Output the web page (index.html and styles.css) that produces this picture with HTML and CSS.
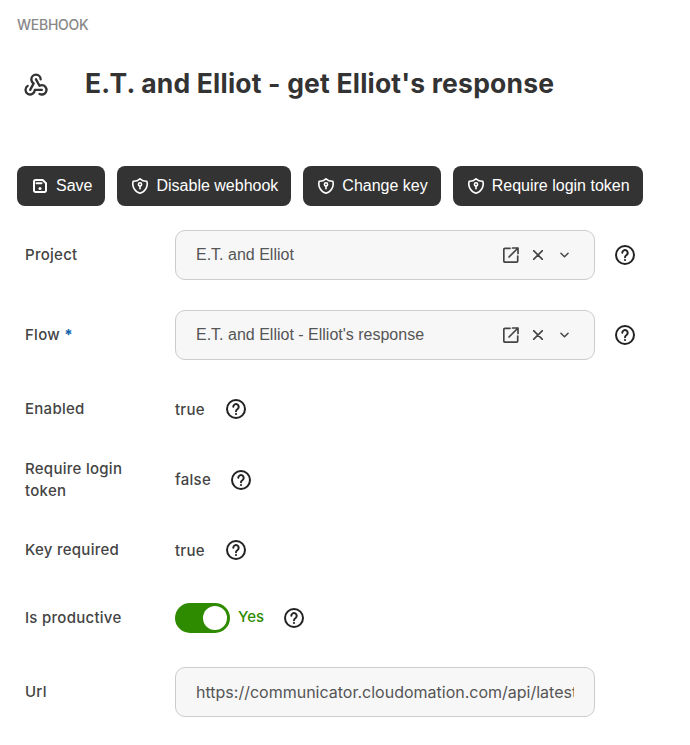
FILE: index.html
```html
<!DOCTYPE html>
<html lang="en">
<head>
<meta charset="utf-8">
<title>Webhook</title>
<link rel="stylesheet" href="styles.css">
</head>
<body>
<main class="page">
  <div class="kicker">WEBHOOK</div>
  <header class="title-row">
    <svg class="title-icon" viewBox="0 0 24 24"><path d="M4.876 13.61a4 4 0 1 0 6.124 3.39h6"/><path d="M15.066 20.502a4 4 0 1 0 1.934 -7.502c-.706 0 -1.424 .179 -2 .5l-3 -5.5"/><path d="M16 8a4 4 0 1 0 -8 0c0 1.506 .77 2.818 2 3.5l-3 5.5"/></svg>
    <h1 class="title">E.T. and Elliot - get Elliot's response</h1>
  </header>
  <div class="actions">
    <button class="btn"><svg class="btn-icon" viewBox="0 0 16 16"><path d="M3.5 2h7.2L14 5.3v7.2a1.5 1.5 0 0 1-1.5 1.5h-9A1.5 1.5 0 0 1 2 12.500v-9A1.500 1.500 0 0 1 3.500 2z"/><path class="thick" d="M4.500 5.200h5"/><circle class="dot" cx="8" cy="10.500" r="1.500"/></svg>Save</button>
    <button class="btn"><svg class="btn-icon" viewBox="2.500 2 19 20"><path d="M12 3a12 12 0 0 0 8.500 3a12 12 0 0 1 -8.500 15a12 12 0 0 1 -8.500 -15a12 12 0 0 0 8.500 -3"/><circle cx="12" cy="10" r="2"/><path d="M12 12v3.500"/></svg>Disable webhook</button>
    <button class="btn"><svg class="btn-icon" viewBox="2.500 2 19 20"><path d="M12 3a12 12 0 0 0 8.500 3a12 12 0 0 1 -8.500 15a12 12 0 0 1 -8.500 -15a12 12 0 0 0 8.500 -3"/><circle cx="12" cy="10" r="2"/><path d="M12 12v3.500"/></svg>Change key</button>
    <button class="btn"><svg class="btn-icon" viewBox="2.500 2 19 20"><path d="M12 3a12 12 0 0 0 8.500 3a12 12 0 0 1 -8.500 15a12 12 0 0 1 -8.500 -15a12 12 0 0 0 8.500 -3"/><circle cx="12" cy="10" r="2"/><path d="M12 12v3.500"/></svg>Require login token</button>
  </div>
  <form class="form">
    <div class="row">
      <div class="label">Project</div>
      <div class="field"><span class="field-text">E.T. and Elliot</span>
        <svg class="fi fi-open" viewBox="0 0 16 16"><path d="M7 1.300H2a1.200 1.200 0 0 0-1.200 1.200V14a1.200 1.200 0 0 0 1.200 1.200h11.500a1.200 1.200 0 0 0 1.200-1.200V9"/><path d="M6 10 14.500 1.500M9.500 1h5.500v5.500"/></svg>
        <svg class="fi fi-x" viewBox="0 0 10 10"><path d="M.5.500l9 9M9.500.500l-9 9"/></svg>
        <svg class="fi fi-chev" viewBox="0 0 10 6"><path d="M1 1l4 4 4-4"/></svg>
      </div>
      <svg class="help" viewBox="0 0 20 20"><circle cx="10" cy="10" r="9"/><path d="M7.300 7.800a2.700 2.700 0 1 1 4.300 2.200c-.9.600-1.600 1.100-1.600 2.200"/><circle class="dot" cx="10" cy="15" r="1.100"/></svg>
    </div>
    <div class="row">
      <div class="label">Flow <span class="req">*</span></div>
      <div class="field"><span class="field-text">E.T. and Elliot - Elliot's response</span>
        <svg class="fi fi-open" viewBox="0 0 16 16"><path d="M7 1.300H2a1.200 1.200 0 0 0-1.200 1.200V14a1.200 1.200 0 0 0 1.200 1.200h11.500a1.200 1.200 0 0 0 1.200-1.200V9"/><path d="M6 10 14.500 1.500M9.500 1h5.500v5.500"/></svg>
        <svg class="fi fi-x" viewBox="0 0 10 10"><path d="M.5.500l9 9M9.500.500l-9 9"/></svg>
        <svg class="fi fi-chev" viewBox="0 0 10 6"><path d="M1 1l4 4 4-4"/></svg>
      </div>
      <svg class="help" viewBox="0 0 20 20"><circle cx="10" cy="10" r="9"/><path d="M7.300 7.800a2.700 2.700 0 1 1 4.300 2.200c-.9.600-1.600 1.100-1.600 2.200"/><circle class="dot" cx="10" cy="15" r="1.100"/></svg>
    </div>
    <div class="row">
      <div class="label">Enabled</div>
      <div class="value">true</div>
      <svg class="help" viewBox="0 0 20 20"><circle cx="10" cy="10" r="9"/><path d="M7.300 7.800a2.700 2.700 0 1 1 4.300 2.200c-.9.600-1.600 1.100-1.600 2.200"/><circle class="dot" cx="10" cy="15" r="1.100"/></svg>
    </div>
    <div class="row">
      <div class="label">Require login token</div>
      <div class="value">false</div>
      <svg class="help" viewBox="0 0 20 20"><circle cx="10" cy="10" r="9"/><path d="M7.300 7.800a2.700 2.700 0 1 1 4.300 2.200c-.9.600-1.600 1.100-1.600 2.200"/><circle class="dot" cx="10" cy="15" r="1.100"/></svg>
    </div>
    <div class="row">
      <div class="label">Key required</div>
      <div class="value">true</div>
      <svg class="help" viewBox="0 0 20 20"><circle cx="10" cy="10" r="9"/><path d="M7.300 7.800a2.700 2.700 0 1 1 4.300 2.200c-.9.600-1.600 1.100-1.600 2.200"/><circle class="dot" cx="10" cy="15" r="1.100"/></svg>
    </div>
    <div class="row">
      <div class="label">Is productive</div>
      <div class="toggle"><span class="knob"></span></div>
      <div class="toggle-text">Yes</div>
      <svg class="help" viewBox="0 0 20 20"><circle cx="10" cy="10" r="9"/><path d="M7.300 7.800a2.700 2.700 0 1 1 4.300 2.200c-.9.600-1.600 1.100-1.600 2.200"/><circle class="dot" cx="10" cy="15" r="1.100"/></svg>
    </div>
    <div class="row">
      <div class="label">Url</div>
      <div class="field"><span class="url">https://communicator.cloudomation.com/api/latest/webhook/e-t-and-elliot</span></div>
    </div>
  </form>
</main>
</body>
</html>
```
FILE: styles.css
```css
* { box-sizing: border-box; }
html, body { margin: 0; padding: 0; background: #fff; }
body { font-family: "Inter", "Liberation Sans", sans-serif; color: #3a3a3a; overflow: hidden; }
.page { width: 690px; height: 745px; padding: 16px 17px 0; overflow: hidden; }
.kicker { font-size: 14px; line-height: 18px; font-weight: 500; letter-spacing: -.25px; color: #888; }
.title-row { display: flex; align-items: center; height: 48px; margin-top: 26px; }
.title-icon { width: 28px; height: 28px; margin-left: 5px; fill: none; stroke: #333; stroke-width: 2; stroke-linecap: round; stroke-linejoin: round; }
.title { margin: -2px 0 0 35px; font-size: 26.500px; line-height: 36px; font-weight: 700; letter-spacing: .2px; color: #333; white-space: nowrap; }
.actions { display: flex; gap: 12px; margin-top: 58px; }
.btn { display: flex; align-items: center; height: 40px; padding: 0 13px 0 15px; border: 0; border-radius: 8px; background: #333; color: #fff; font: 16px "Liberation Sans", Arial, sans-serif; white-space: nowrap; }
.btn-icon { width: 16px; height: 16px; margin-right: 8px; fill: none; stroke: #fff; stroke-width: 2; stroke-linecap: round; stroke-linejoin: round; }
.btn-icon .dot { fill: #fff; stroke: none; }
.form { display: flex; flex-direction: column; gap: 30px; margin-top: 24px; padding-left: 8px; }
.row { display: flex; align-items: center; min-height: 38px; }
.label { flex: 0 0 150px; width: 150px; padding-right: 40px; font-size: 15px; line-height: 21.500px; font-weight: 500; letter-spacing: .27px; color: #444; }
.req { color: #0f62a8; font-weight: 700; }
.field { display: flex; align-items: center; width: 420px; height: 50px; padding: 0 20px; border: 1px solid #ccc; border-radius: 10px; background: #f7f7f7; }
.field-text { flex: 1; font: 16px "Liberation Sans", Arial, sans-serif; color: #555; white-space: nowrap; }
.url { display: block; width: 378px; overflow: hidden; font-size: 16px; color: #555; white-space: nowrap; }
.fi { flex: none; fill: none; stroke: #444; stroke-width: 1.600; stroke-linecap: round; stroke-linejoin: round; }
.fi-open { width: 16px; height: 16px; stroke-width: 1.700; }
.fi-x { width: 10px; height: 10px; margin-left: 14px; }
.fi-chev { width: 9px; height: 6px; margin: 0 5px 0 17px; }
.help { flex: none; width: 20px; height: 20px; margin-left: 20px; fill: none; stroke: #222; stroke-width: 2; stroke-linecap: round; }
.help .dot { fill: #222; stroke: none; }
.value { min-width: 31px; font-size: 15px; font-weight: 500; letter-spacing: .27px; color: #444; }
.toggle { display: flex; align-items: center; justify-content: flex-end; width: 55px; height: 30px; padding-right: 3px; border-radius: 15px; background: #2e8b00; }
.knob { width: 24px; height: 24px; border-radius: 50%; background: #fff; }
.toggle-text { margin: -4px 0 0 8px; font-size: 15px; font-weight: 500; color: #2e8b00; }
```
